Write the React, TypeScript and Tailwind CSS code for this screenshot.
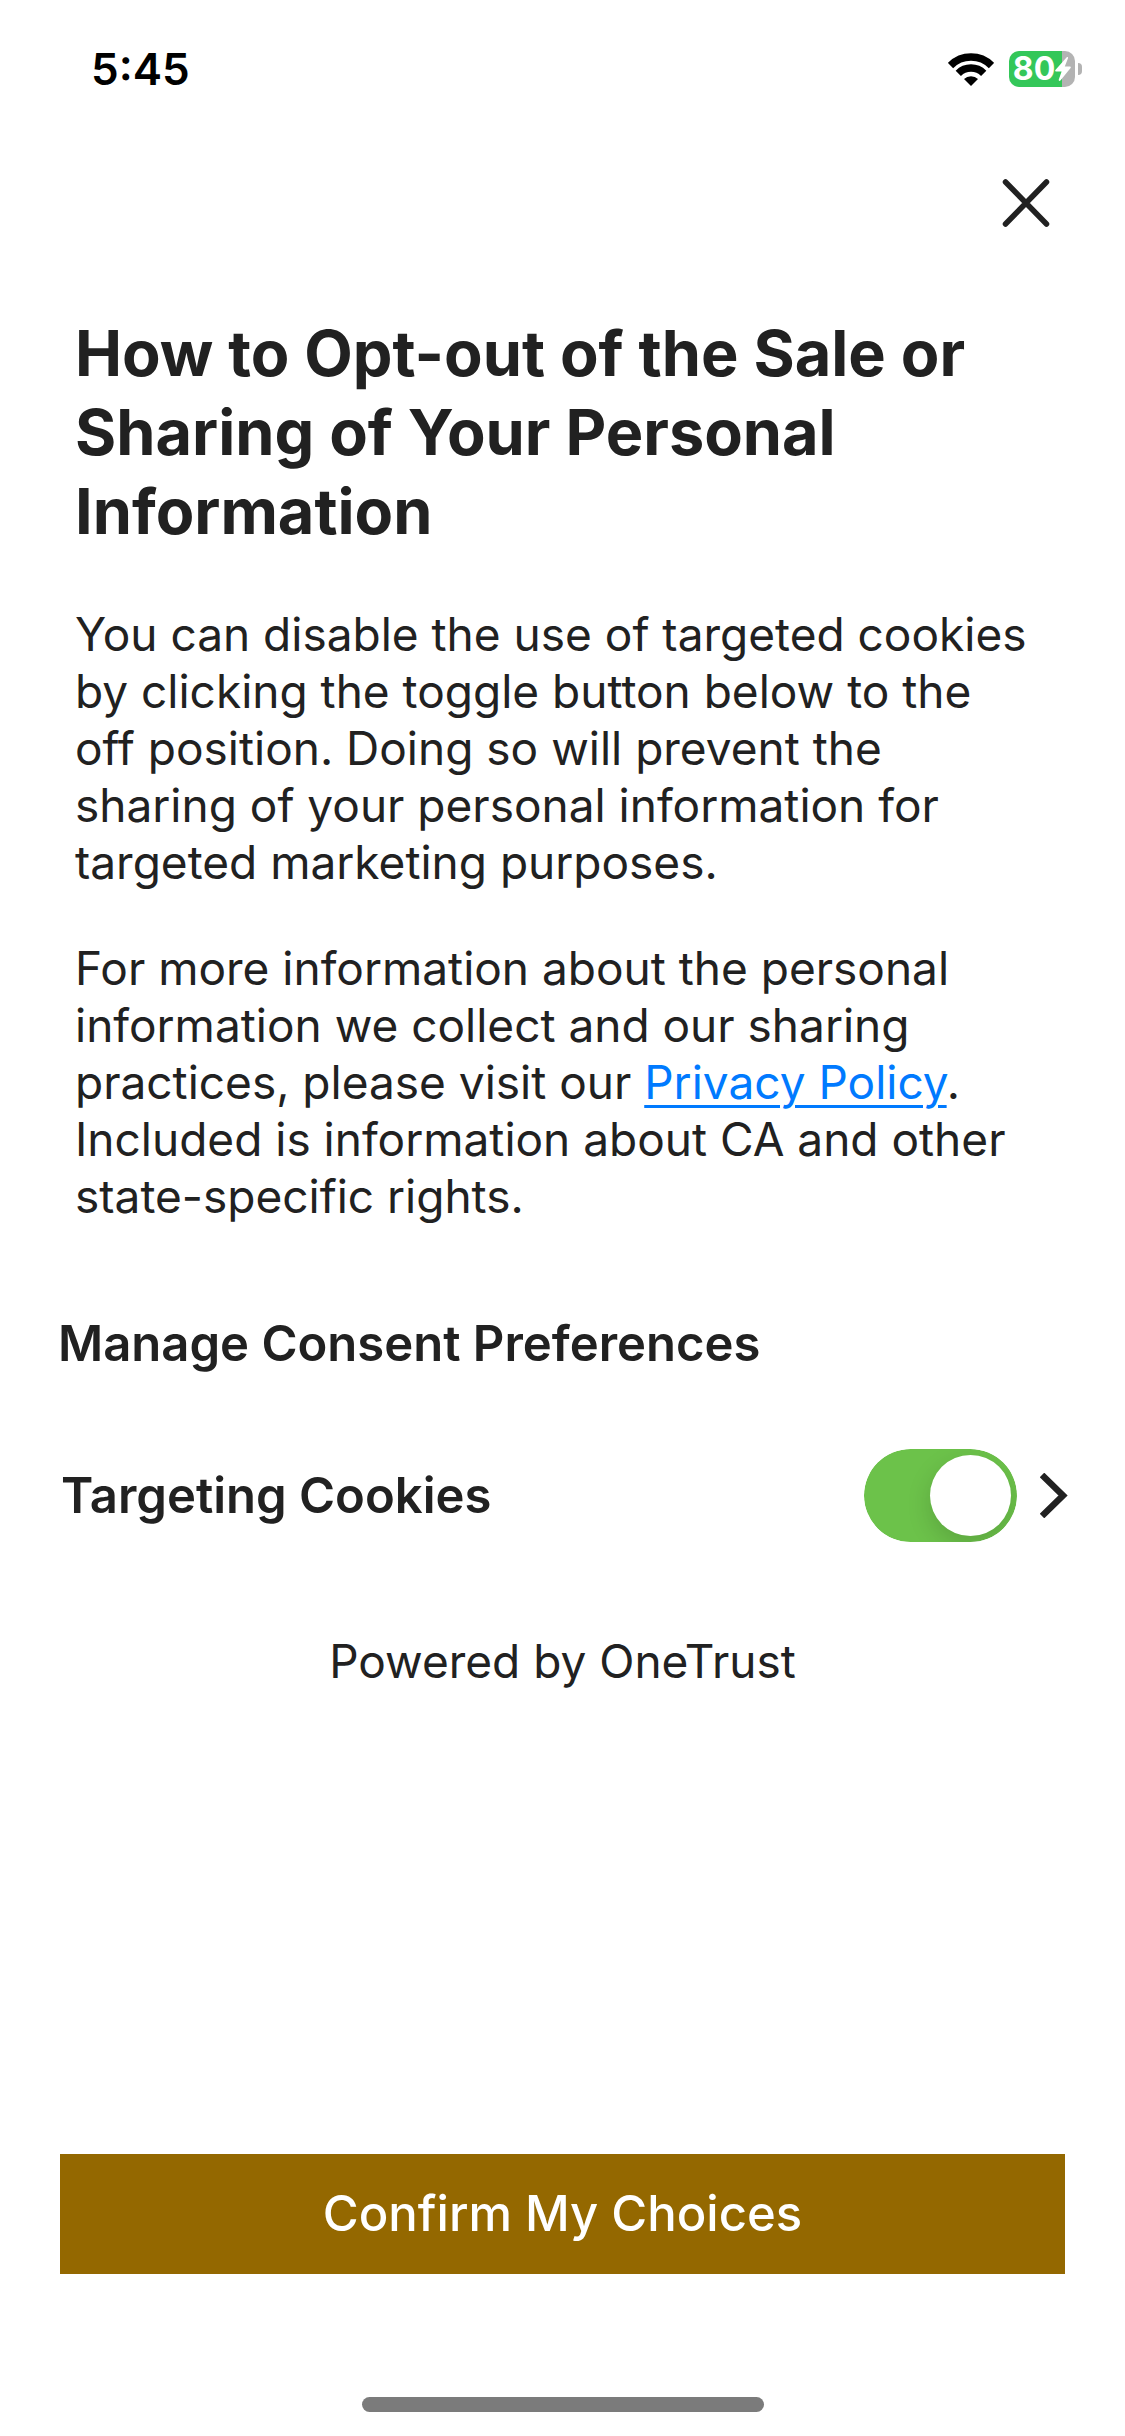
import { useState } from "react";

function WifiIcon() {
  return (
    <svg className="h-[33px] w-[46px]" viewBox="0 0 46 33" aria-hidden="true">
      <g fill="none" stroke="#000" strokeWidth="7.5">
        <path d="M2.5 12.5A29 29 0 0 1 43.5 12.5" />
        <path d="M10.3 20.3A18 18 0 0 1 35.7 20.3" />
      </g>
      <path d="M16 26a10 10 0 0 1 14 0L23 33z" />
    </svg>
  );
}

function Battery() {
  return (
    <div className="flex items-center gap-[3px]" role="img" aria-label="Battery 80 percent, charging">
      <div className="flex h-9 w-[66px] items-center justify-center rounded-[10px] bg-linear-to-r from-[#34c759] from-80% to-[#b3b3b3] to-80% text-white">
        <span className="text-[32px] leading-9 font-bold">80</span>
        <svg className="h-6 w-4" viewBox="0 0 16 24" fill="currentColor" aria-hidden="true">
          <path d="M11.5.4.4 13c-.5.6-.2 1.4.6 1.4h5.6L3.8 22.5c-.4 1.2.8 1.900 1.600.9L15.600 11c.5-.6.2-1.400-.6-1.400H9.800L13 1.300C13.400.1 12.300-.5 11.500.4z" />
        </svg>
      </div>
      <div className="h-3 w-1 rounded-r-full bg-[#b3b3b3]" />
    </div>
  );
}

export default function App() {
  const [targeting, setTargeting] = useState(true);

  return (
    <div className="flex min-h-screen flex-col bg-white font-['Inter','Liberation_Sans',sans-serif] text-[#212121]">
      <header className="flex h-[138px] items-center justify-between pr-[43px] pl-[91px] text-black">
        <time className="text-[44px] leading-none font-semibold">5:45</time>
        <div className="flex items-center gap-[15px]">
          <WifiIcon />
          <Battery />
        </div>
      </header>

      <div className="flex justify-end pr-[60px]">
        <button type="button" aria-label="Close" className="flex h-[130px] w-[78px] items-center justify-center">
          <svg className="h-12 w-12" viewBox="0 0 48 48" fill="none" stroke="currentColor" strokeWidth="5.5" strokeLinecap="round" aria-hidden="true">
            <path d="M3.5 3l41 42M44.5 3l-41 42" />
          </svg>
        </button>
      </div>

      <main className="flex grow flex-col">
        <section className="pt-[46px] pr-[90px] pl-[75px]">
          <h1 className="text-[63px] leading-[79px] font-bold">
            How to Opt-out of the Sale or Sharing of Your Personal Information
          </h1>
          <p className="mt-[55px] text-[46px] leading-[57px]">
            You can disable the use of targeted cookies by clicking the toggle button below to the off position. Doing so will prevent the sharing of your personal information for targeted marketing purposes.
          </p>
          <p className="mt-[49px] text-[46px] leading-[57px]">
            For more information about the personal information we collect and our sharing practices, please visit our{" "}
            <a href="#privacy-policy" className="text-[#007aff] underline decoration-[3px] underline-offset-[6px]">
              Privacy Policy
            </a>
            . Included is information about CA and other state-specific rights.
          </p>
        </section>

        <h2 className="mt-[89px] px-[58px] text-[49px] leading-[60px] font-semibold">Manage Consent Preferences</h2>

        <section className="mt-[75px] flex items-center pr-[57px] pl-[61px]">
          <label htmlFor="targeting" className="grow text-[49px] leading-[93px] font-semibold">
            Targeting Cookies
          </label>
          <span className="relative flex h-[93px] w-[153px] overflow-hidden rounded-full">
            <input
              id="targeting"
              type="checkbox"
              role="switch"
              checked={targeting}
              onChange={(e) => setTargeting(e.target.checked)}
              className="peer h-full w-full cursor-pointer appearance-none rounded-full bg-gray-300 checked:bg-[#6cc24a]"
            />
            <span className="pointer-events-none absolute top-[6px] left-[6px] size-[81px] rounded-full bg-white shadow-[0_9px_24px_rgba(0,0,0,0.15)] peer-checked:left-[66px]" />
          </span>
          <button type="button" aria-label="Targeting Cookies details" className="ml-[23px] flex h-[93px] items-center">
            <svg className="h-[45px] w-7" viewBox="0 0 28 45" fill="none" stroke="currentColor" strokeWidth="6.5" aria-hidden="true">
              <path d="M2 2l21 20.5L2 43" />
            </svg>
          </button>
        </section>

        <p className="mt-[91px] text-center text-[46px] leading-[57px]">Powered by OneTrust</p>
      </main>

      <footer className="flex flex-col items-center px-[60px] pb-6">
        <button type="button" className="h-[120px] w-full bg-[#946800] text-[49px] font-medium text-white">
          Confirm My Choices
        </button>
        <div className="mt-[123px] h-[15px] w-[402px] rounded-full bg-[#7b7b7b]" />
      </footer>
    </div>
  );
}
